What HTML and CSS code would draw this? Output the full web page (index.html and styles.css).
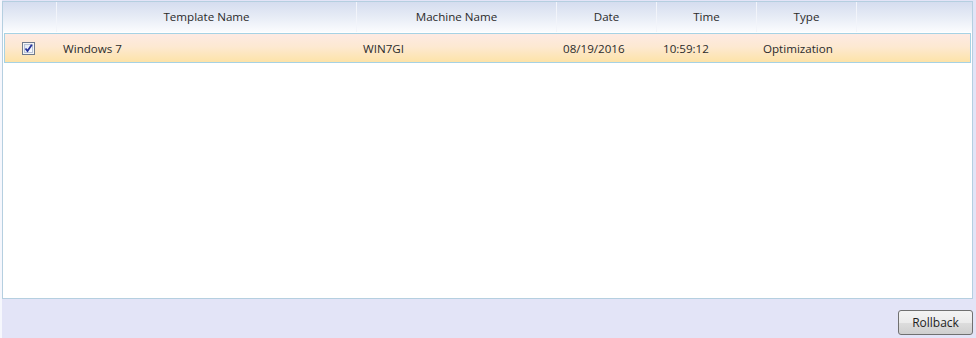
FILE: index.html
```html
<!DOCTYPE html>
<html lang="en">
<head>
    <meta charset="UTF-8">
    <title>Rollback</title>
    <link rel="stylesheet" href="styles.css">
</head>
<body>
    <div class="window">
        <div class="grid">
            <div class="grid-header">
                <div class="col col-check"></div>
                <div class="col col-template">Template Name</div>
                <div class="col col-machine">Machine Name</div>
                <div class="col col-date">Date</div>
                <div class="col col-time">Time</div>
                <div class="col col-type">Type</div>
                <div class="col col-fill"></div>
            </div>
            <div class="grid-body">
                <div class="grid-row selected">
                    <div class="cell col-check">
                        <svg class="checkbox" width="13" height="13" viewBox="0 0 13 13">
                            <defs>
                                <linearGradient id="cbfill" x1="0" y1="0" x2="1" y2="1">
                                    <stop offset="0" stop-color="#dfe6f2"/>
                                    <stop offset="1" stop-color="#ffffff"/>
                                </linearGradient>
                            </defs>
                            <rect x="0.5" y="0.5" width="12" height="12" fill="#f4f4f4" stroke="#6f7a8c"/>
                            <rect x="2.5" y="2.5" width="8" height="8" fill="url(#cbfill)" stroke="#b7c2d6"/>
                            <path d="M3.5 6.5 L5.5 9 L9.8 2.8" fill="none" stroke="#26329a" stroke-width="1.8"/>
                        </svg>
                    </div>
                    <div class="cell col-template">Windows 7</div>
                    <div class="cell col-machine">WIN7GI</div>
                    <div class="cell col-date">08/19/2016</div>
                    <div class="cell col-time">10:59:12</div>
                    <div class="cell col-type">Optimization</div>
                    <div class="cell col-fill"></div>
                </div>
            </div>
        </div>
        <div class="actions">
            <button class="btn">Rollback</button>
        </div>
    </div>
</body>
</html>
```

FILE: styles.css
```css
html, body {
    margin: 0;
    padding: 0;
}
body {
    width: 976px;
    height: 338px;
    background-color: #e3e4f7;
    font-family: "Segoe UI", "Open Sans", "Noto Sans", Arial, sans-serif;
    font-size: 11.6px;
    color: #2b2b2b;
    overflow: hidden;
}
.window {
    display: flex;
    flex-direction: column;
    height: 338px;
    padding: 1px 3px 0 2px;
    box-sizing: border-box;
    background: linear-gradient(to right, #f6f7fd 0, #f6f7fd 2px, transparent 2px);
}
.grid {
    height: 298px;
    box-sizing: border-box;
    border: 1px solid #b5cfe0;
    background-color: #fff;
    display: flex;
    flex-direction: column;
}
.grid-header {
    display: flex;
    height: 30px;
    background: linear-gradient(to bottom, #d5ddef 0%, #e7ecf6 50%, #fbfcfe 100%);
}
.grid-header .col {
    box-sizing: border-box;
    display: flex;
    align-items: center;
    justify-content: center;
    border-right: 1px solid #f2f4fa;
    padding-bottom: 1px;
}
.grid-header .col-fill {
    border-right: none;
}
.col-check { width: 54px; }
.col-template { width: 300px; }
.col-machine { width: 200px; }
.col-date { width: 100px; }
.col-time { width: 100px; }
.col-type { width: 100px; }
.col-fill { flex: 1; }
.grid-body {
    flex: 1;
    padding: 1px 1px 0 1px;
}
.grid-row {
    display: flex;
    height: 30px;
    box-sizing: border-box;
}
.grid-row.selected {
    border: 1px solid #a6d2e4;
    background: linear-gradient(to bottom, #fdeae3 0%, #fde9d2 45%, #fde3a8 100%);
}
.grid-row .cell {
    box-sizing: border-box;
    display: flex;
    align-items: center;
    padding-left: 5px;
}
.grid-row .col-check {
    width: 53px;
    padding-left: 17px;
}
.checkbox {
    display: block;
}
.actions {
    display: flex;
    justify-content: flex-end;
    padding-top: 11px;
}
.btn {
    width: 75px;
    height: 25px;
    font-family: inherit;
    font-size: 12px;
    color: #1e1e1e;
    border: 1px solid #707070;
    border-radius: 3px;
    background: linear-gradient(to bottom, #f3f3f3 0%, #ebebeb 50%, #dddddd 51%, #cfcfcf 100%);
    padding: 0 0 1px 0;
}
```
